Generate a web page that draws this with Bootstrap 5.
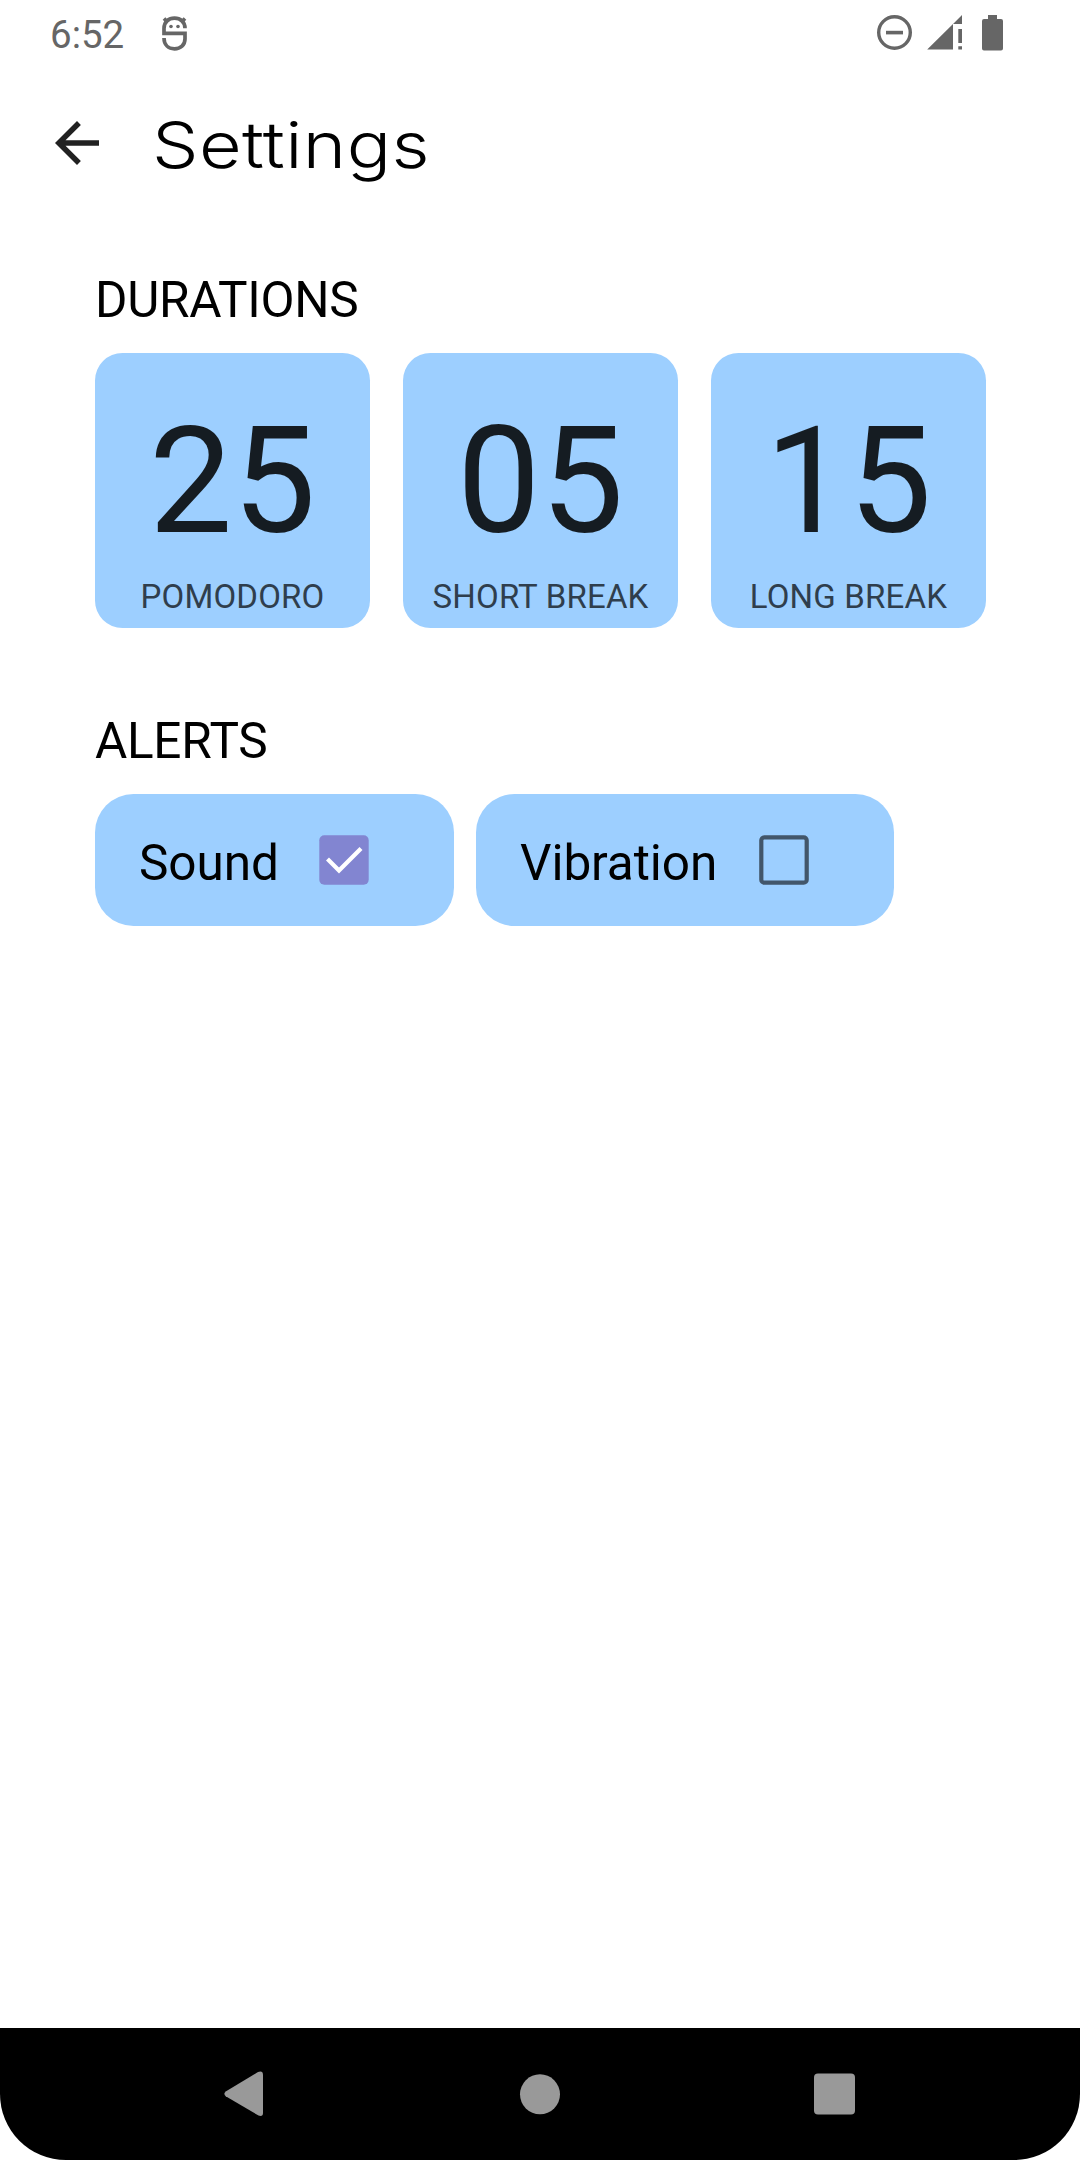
<!DOCTYPE html>
<html lang="en">
<head>
<meta charset="utf-8">
<meta name="viewport" content="width=device-width, initial-scale=1">
<title>Settings</title>
<link href="https://cdn.jsdelivr.net/npm/bootstrap@5.3.0/dist/css/bootstrap.min.css" rel="stylesheet">
<style>
  body { font-family: Roboto, "Liberation Sans", sans-serif; color: #000; background: #fff; }
  .screen { width: 1080px; height: 2160px; overflow: hidden; }
  .status-bar { height: 66px; padding: 0 77px 0 50px; color: #666; }
  .clock { width: 111px; font-size: 38.5px; line-height: 46px; padding-top: 12px; }
  .status-bar svg { fill: currentColor; display: block; }
  .mascot { margin-top: 16px; }
  .status-icons { padding-top: 15px; gap: 15px; }
  .app-bar { height: 154px; padding: 44px 44px 0; }
  .back-btn { width: 66px; height: 66px; line-height: 0; }
  .app-title { font-family: Inter, "Open Sans", sans-serif; font-weight: 300; font-size: 64px; line-height: 78px; margin: -4px 0 0 42px; letter-spacing: .4px; transform: scaleX(1.15); transform-origin: left center; }
  .settings { padding: 51px 94px 0 95px; }
  .section-title { font-size: 49.5px; line-height: 58px; font-weight: 400; margin-bottom: 24px; letter-spacing: -.3px; }
  .durations { gap: 33px; margin-bottom: 84px; }
  .tile { width: 275px; height: 275px; border: 0; border-radius: 27.5px; background: #9dcfff; padding-top: 41px; }
  .tile-num { font-size: 148.5px; line-height: 174px; color: #151c22; }
  .tile-label { font-size: 33px; line-height: 39px; margin-top: 9px; color: #2f3e4d; letter-spacing: .18px; }
  .alerts { gap: 22px; }
  .chip { height: 132px; border-radius: 38.5px; background: #9dcfff; font-size: 49.5px; line-height: 58px; padding: 6px 85px 0 44px; letter-spacing: -.08px; }
  .chip-sound { width: 359px; }
  .chip-vibration { width: 418px; }
  .check-box { width: 50px; height: 50px; margin-top: -6px; }
  .nav-keys { height: 132px; background: #000; border-radius: 0 0 66px 66px; padding: 0 225px 0 224px; }
  .nav-keys svg { display: block; fill: #999; }
</style>
</head>
<body>
<div class="screen d-flex flex-column">
  <header class="status-bar d-flex justify-content-between align-items-start flex-shrink-0">
    <div class="d-flex">
      <div class="clock">6:52</div>
      <svg class="mascot" width="28" height="36" viewBox="0 0 28 36" aria-hidden="true">
        <g fill="none" stroke="currentColor" stroke-width="3.7">
          <path d="M24 12.2C24 6 19.5 2.2 13.5 2.2S3 6 3 12.5V17.3H24V23C24 29 19.5 32.8 13.5 32.8S3 29 3 22"/>
          <path d="M3 2.5l4 4M24 2.5l-4 4"/>
        </g>
        <circle cx="10" cy="10.5" r="1.8"/><circle cx="17" cy="10.5" r="1.8"/>
      </svg>
    </div>
    <div class="status-icons d-flex">
      <svg width="35" height="35" viewBox="0 0 35 35" aria-hidden="true"><circle cx="17.5" cy="17.5" r="15.8" fill="none" stroke="currentColor" stroke-width="3.4"/><path d="M9 15.8h17v3.6H9z"/></svg>
      <svg width="35" height="35" viewBox="0 0 35 35" aria-hidden="true"><path d="M.2 34.6 26 9v25.6zM26 9l9-9v9zM31.3 14H35v14h-3.7zM31.3 31.2H35v3.4h-3.7z"/></svg>
      <svg width="26" height="36" viewBox="0 0 26 36" aria-hidden="true"><path d="M11 0h9v4h4q2 0 2 2v27.5q0 2-2 2H7q-2 0-2-2V6q0-2 2-2h4z"/></svg>
    </div>
  </header>

  <div class="app-bar d-flex align-items-start flex-shrink-0">
    <button type="button" class="btn back-btn p-0 border-0" aria-label="Back">
      <svg width="66" height="66" viewBox="0 0 24 24" fill="#212121"><path d="M20 11H7.83l5.59-5.59L12 4l-8 8 8 8 1.41-1.41L7.83 13H20z"/></svg>
    </button>
    <h1 class="app-title">Settings</h1>
  </div>

  <main class="settings flex-grow-1">
    <h2 class="section-title">DURATIONS</h2>
    <div class="durations d-flex">
      <div class="card tile text-center"><div class="tile-num">25</div><div class="tile-label">POMODORO</div></div>
      <div class="card tile text-center"><div class="tile-num">05</div><div class="tile-label">SHORT BREAK</div></div>
      <div class="card tile text-center"><div class="tile-num">15</div><div class="tile-label">LONG BREAK</div></div>
    </div>
    <h2 class="section-title">ALERTS</h2>
    <div class="alerts d-flex">
      <div class="chip chip-sound d-flex align-items-center justify-content-between">
        <span>Sound</span>
        <svg class="check-box" viewBox="0 0 50 50" role="img" aria-label="On"><rect x=".3" y=".3" width="49.4" height="49.4" rx="5" fill="#8285d1"/><path d="M8.5 24 20 35.5 42 13.5" fill="none" stroke="#fff" stroke-width="4.2"/></svg>
      </div>
      <div class="chip chip-vibration d-flex align-items-center justify-content-between">
        <span>Vibration</span>
        <svg class="check-box" viewBox="0 0 50 50" role="img" aria-label="Off"><rect x="2.3" y="2.3" width="45.4" height="45.4" rx="3" fill="none" stroke="#42566a" stroke-width="4.2"/></svg>
      </div>
    </div>
  </main>

  <nav class="nav-keys d-flex align-items-center justify-content-between flex-shrink-0">
    <svg width="40" height="46" viewBox="0 0 40 46" aria-label="Back"><path d="M1.7 20.4 34 1Q39 -.8 39 4V42Q39 46 34.5 44.6L1.7 25.2Q-1 22.8 1.7 20.4z"/></svg>
    <svg width="41" height="41" viewBox="0 0 41 41" aria-label="Home"><circle cx="21" cy="20.3" r="20"/></svg>
    <svg width="41" height="42" viewBox="0 0 41 42" aria-label="Recents"><rect y=".5" width="41" height="41" rx="4"/></svg>
  </nav>
</div>
<script src="https://cdn.jsdelivr.net/npm/bootstrap@5.3.0/dist/js/bootstrap.bundle.min.js"></script>
</body>
</html>
